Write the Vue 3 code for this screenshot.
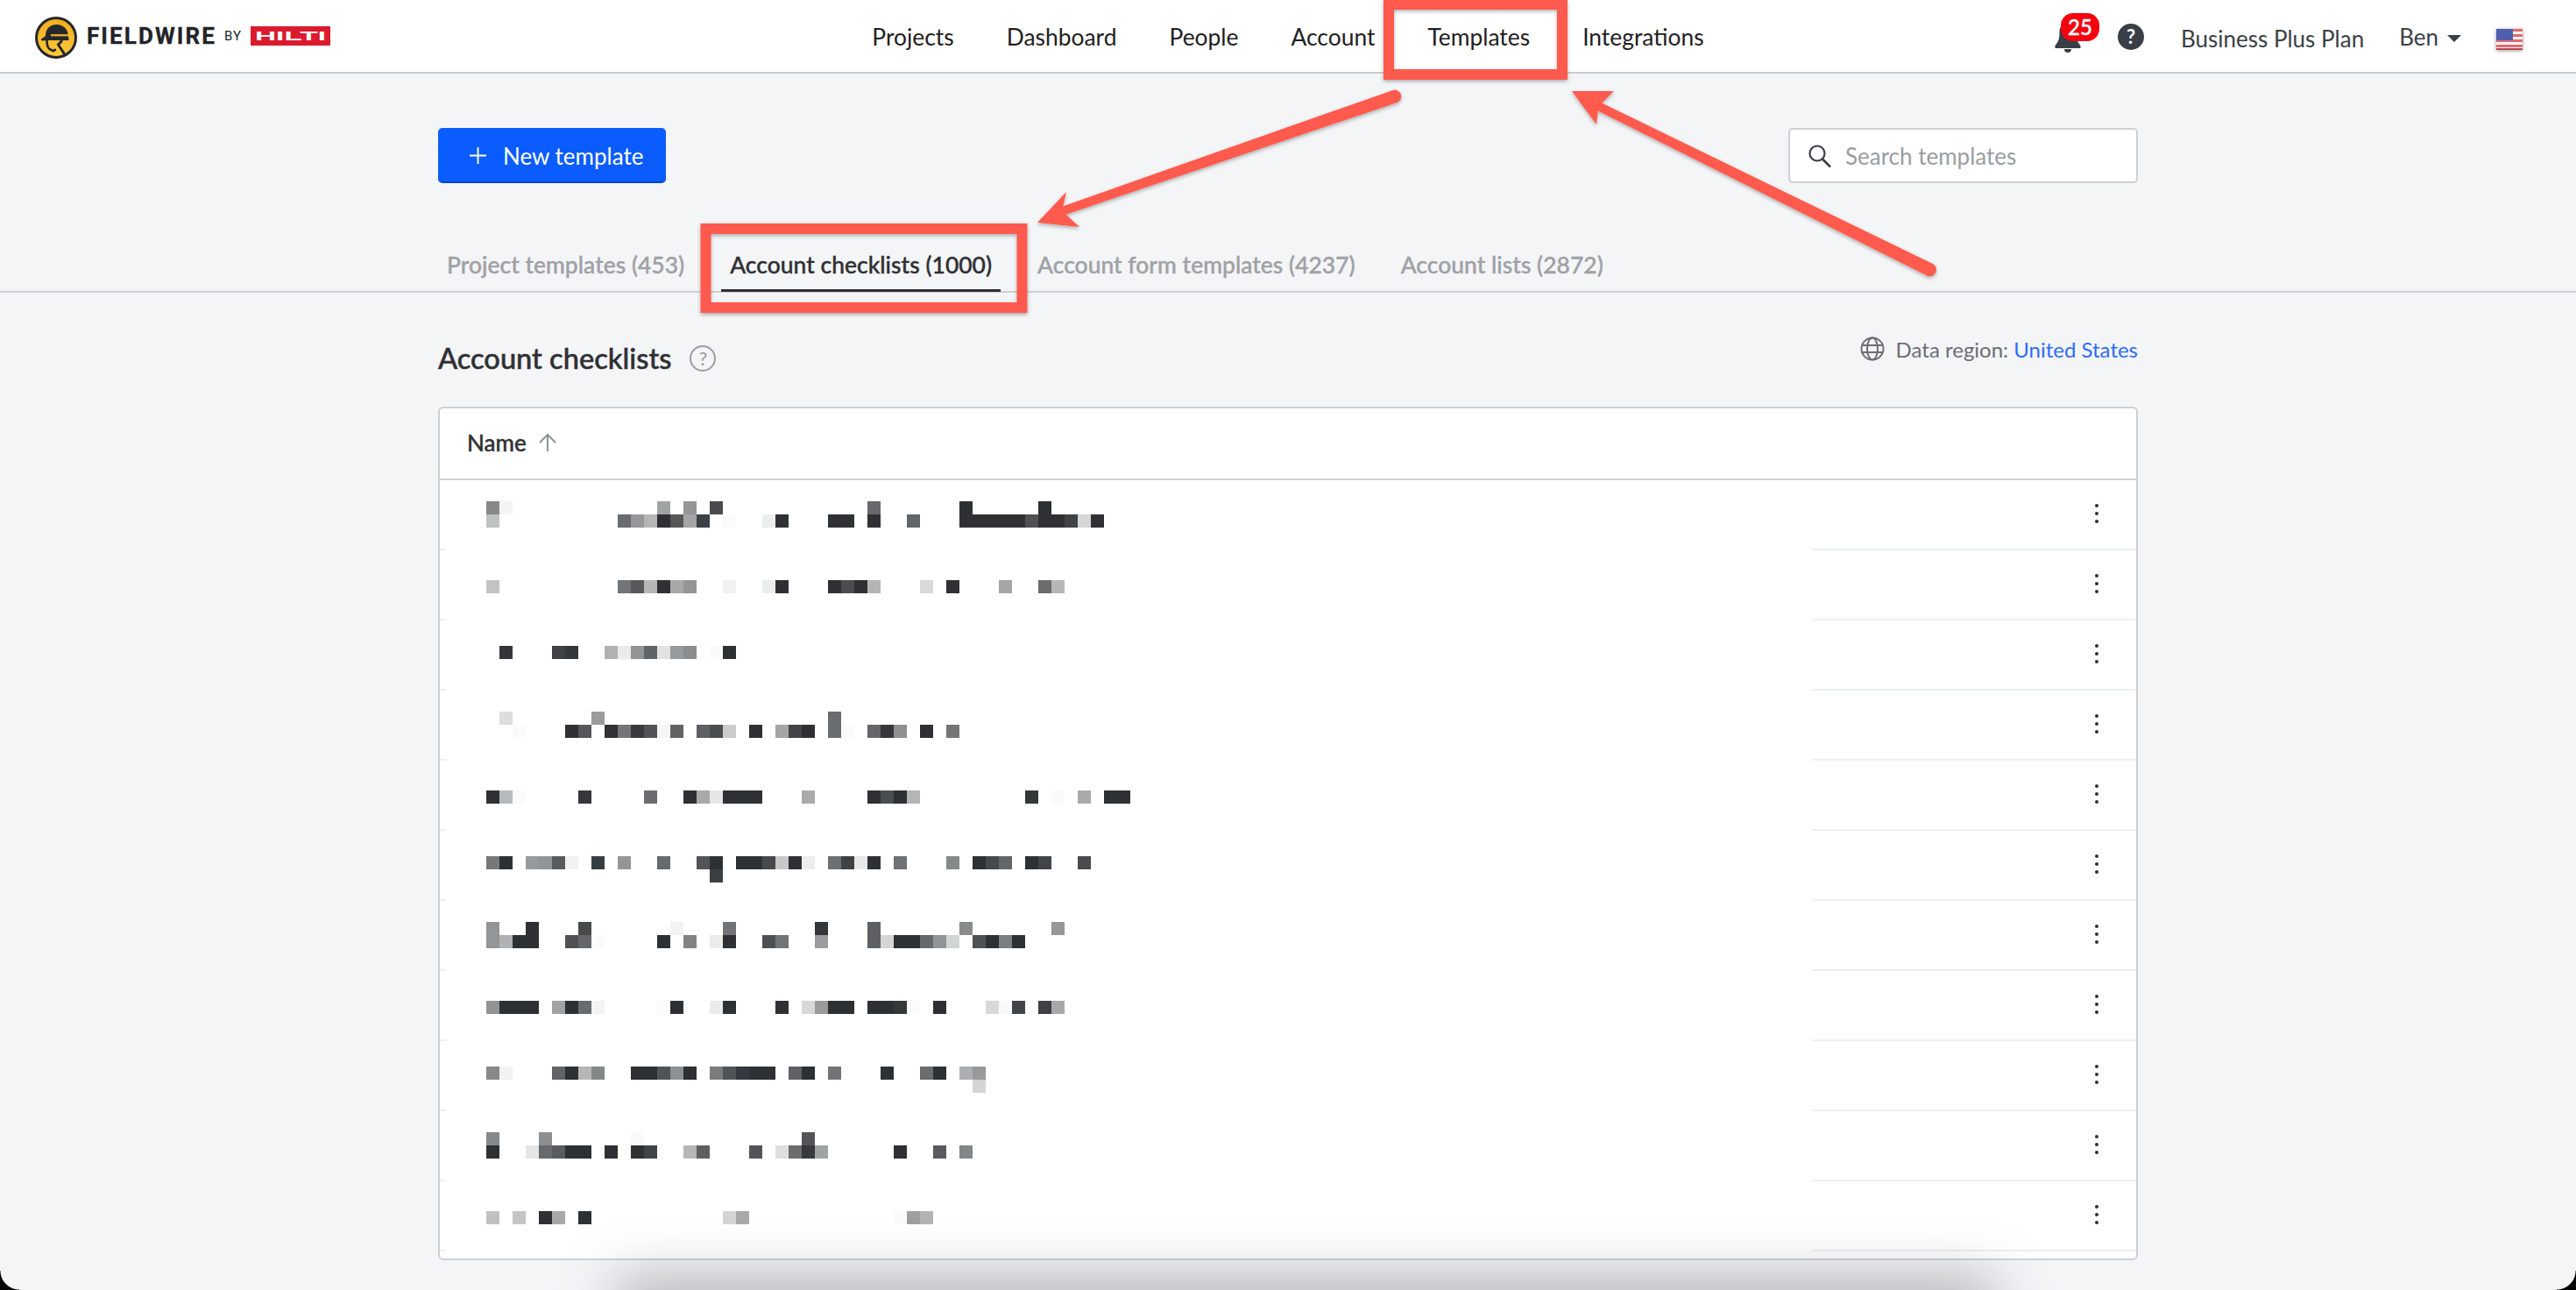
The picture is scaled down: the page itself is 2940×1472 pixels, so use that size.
<script setup>
const navItems = ['Projects', 'Dashboard', 'People', 'Account', 'Templates', 'Integrations']
const tabs = ['Project templates (453)', 'Account checklists (1000)', 'Account form templates (4237)', 'Account lists (2872)']
const rows = Array.from({ length: 11 }, (_, i) => i)

const D = '2f3033'
const mosaicData = {
  0: `0:87888a 1:f3f4f4 13:a2a3a5 15:949597 17:4a4b4d 29:68696c 36:${D} 42:${D}`,
  1: `0:c0c2c2 10:6a6b6e 11:97989a 12:b5b7b6 13:${D} 14:555658 15:a5a5a6 16:3a4045 18:fbfbfb 21:eceeed 22:${D} 26:${D} 27:313234 29:${D} 32:646568 36:${D} 37:${D} 38:${D} 39:${D} 40:${D} 41:505154 42:${D} 43:${D} 44:414245 45:d6d6d6 46:${D}`,
  6: `0:c2c4c4 10:737477 11:58595c 12:b5b7b6 13:${D} 14:a8a8a9 15:949597 18:f2f2f2 21:eceeed 22:${D} 26:${D} 27:4c4d50 28:${D} 29:b5b5b6 33:d9d9da 35:${D} 39:a5a6a8 42:6b6c6e 43:b6b6b7`,
  11: `1:35363a 5:404144 6:36373a 9:b0b1b0 10:ebebeb 11:939495 12:626365 13:e2e2e2 14:98999b 15:8b8c8e 17:fafafa 18:${D}`,
  16: `1:dddddd 8:9a9b9a 26:6b6c6e`,
  17: `2:fbfbfb 6:${D} 7:56575a 9:313235 10:747577 11:383a3d 12:525356 13:f6f6f6 14:626365 16:5f6063 17:4b4e50 18:cbcbcb 20:${D} 22:a4a5a5 23:434447 24:${D} 26:6b6c6e 27:fbfbfb 29:656669 30:36373a 31:8f9092 33:${D} 35:747577`,
  22: `0:${D} 1:b8b9bb 2:fafafa 7:36373a 12:6b6c6e 15:${D} 16:a9a9aa 17:e6e6e6 18:${D} 19:${D} 20:${D} 24:aaaaab 29:${D} 30:4c4d50 31:${D} 32:b5b5b6 41:343838 43:fafafa 45:a9a9aa 47:${D} 48:${D}`,
  27: `0:77787a 1:${D} 3:98999a 4:939495 5:5a5b5e 6:f1f1f1 8:373e43 10:959696 13:68696c 16:535457 17:${D} 19:${D} 20:${D} 21:48494c 22:c8c8c8 23:${D} 24:ededed 26:6e6f72 27:404144 28:e8e8e8 29:${D} 31:707174 35:87888a 37:${D} 38:454a4c 39:646568 41:${D} 42:434447 45:4a4b4e`,
  28: `17:3b3f43`,
  32: `0:949597 3:${D} 7:48494b 14:f3f3f3 18:727376 25:35363a 29:5e5f62 36:898a8c 43:969798`,
  33: `0:949597 1:b0b1b3 2:${D} 3:${D} 6:4f5053 7:66676a 8:fafafa 13:${D} 15:828385 17:ebebeb 18:${D} 21:4e4f52 22:727375 25:9a9b9d 29:5e5f62 30:d5d5d5 31:${D} 32:${D} 33:68696c 34:939495 35:d3d5d4 37:505154 38:${D} 39:7d7e80 40:${D}`,
  38: `0:929395 1:${D} 2:${D} 3:${D} 5:a1a2a4 6:${D} 7:6a6b6e 8:f3f3f3 13:fbfbfb 14:${D} 17:ebebeb 18:${D} 22:${D} 24:d8d8d8 25:9b9b9b 26:${D} 27:${D} 29:${D} 30:${D} 31:343939 32:fcfcfc 34:${D} 38:d8d8d8 39:fafafa 40:434447 42:404144 43:a8a8a8`,
  43: `0:87888a 1:f2f2f2 5:626366 6:${D} 7:b5b6b5 8:868789 11:${D} 12:${D} 13:525356 14:8f9092 15:${D} 17:7a7b7d 18:525356 19:33393e 20:${D} 21:${D} 23:606164 24:${D} 26:737477 30:${D} 33:6b6c6e 34:${D} 36:adaeb0 37:98999b`,
  44: `37:d3d5d5`,
  48: `0:87888a 4:8d8e90 11:fafafa 24:545558`,
  49: `0:${D} 3:e6e6e6 4:68696c 5:5a5b5e 6:${D} 7:${D} 9:${D} 11:${D} 12:424346 15:b5b6b5 16:5e5f62 20:535457 22:dedede 23:6b6c6e 24:37383b 25:a2a3a5 31:${D} 34:5a5b5e 36:848587`,
  54: `0:c0c2c1 2:c5c5c6 4:${D} 5:a8a8a8 7:${D} 18:d5d5d6 19:a9a9a9 31:fbfbfb 32:9f9fa1 33:b3b3b4`
}

const cells = Object.entries(mosaicData).flatMap(([row, list]) =>
  list.split(' ').map((entry) => {
    const [col, hex] = entry.split(':')
    return { key: `${row}-${col}`, gridRow: Number(row) + 1, gridColumn: Number(col) + 1, background: `#${hex}` }
  })
)
</script>

<template>
  <div class="page">
    <header class="topbar">
      <div class="brand">
        <svg class="logo-mark" viewBox="0 0 48 48" aria-hidden="true">
          <defs>
            <linearGradient id="logoFill" x1="0" y1="0" x2="0" y2="1">
              <stop offset="0" stop-color="#f2ad1e" />
              <stop offset="1" stop-color="#fdc93c" />
            </linearGradient>
          </defs>
          <circle cx="24" cy="24" r="22.5" fill="url(#logoFill)" stroke="#26272b" stroke-width="3" />
          <path d="M6.5 26 L12 22 C12 14 17 9 24.5 9 C32 9 37.5 14 38 22 L38.5 27 L13 27 L8 27.5 Z" fill="#26272b" />
          <rect x="18" y="20" width="20" height="2.4" fill="#e0a92c" />
          <path d="M13.5 27 C13.5 32 14 35 16.5 37 L20.5 39 L24 37.5" fill="none" stroke="#26272b" stroke-width="2.6" />
          <path d="M31 27 L26.5 32 L35 45" fill="none" stroke="#26272b" stroke-width="3" />
        </svg>
        <span class="wordmark">FIELDWIRE</span>
        <span class="by">BY</span>
        <svg class="hilti" viewBox="0 0 91 22" aria-label="Hilti">
          <rect width="91" height="22" fill="#db1a2e" />
          <text x="5" y="16" textLength="81" lengthAdjust="spacingAndGlyphs" class="hilti-text">HILTI</text>
        </svg>
      </div>

      <nav class="nav">
        <a v-for="item in navItems" :key="item" class="nav-item" :class="{ active: item === 'Templates' }">{{ item }}</a>
      </nav>

      <div class="top-right">
        <div class="bell">
          <svg viewBox="0 0 30 34" class="bell-icon" aria-hidden="true">
            <path d="M15 0 C8 0 5.5 5 5.5 11 C5.5 19 4 22 0.5 26 L0.5 29 L29.5 29 L29.5 26 C26 22 24.500 19 24.500 11 C24.500 5 22 0 15 0 Z M11 30 L19 30 C19 33 17 34 15 34 C13 34 11 33 11 30 Z" fill="#3a3e46" />
          </svg>
          <span class="badge">25</span>
        </div>
        <span class="help-solid">?</span>
        <span class="plan">Business Plus Plan</span>
        <span class="user">Ben<i class="caret"></i></span>
        <svg class="flag" viewBox="0 0 30 24" aria-hidden="true">
          <rect width="30" height="24" fill="#f4f0f0" />
          <rect y="0" width="30" height="3" fill="#e06a70" />
          <rect y="6" width="30" height="3" fill="#e06a70" />
          <rect y="12" width="30" height="3" fill="#e06a70" />
          <rect y="18" width="30" height="3" fill="#e06a70" />
          <rect y="22" width="30" height="2" fill="#b8454c" />
          <rect width="19" height="13" fill="#4f5fae" />
        </svg>
      </div>
    </header>

    <main class="content">
      <div class="toolbar">
        <button class="new-btn" type="button">
          <svg class="plus" viewBox="0 0 20 20" aria-hidden="true"><path d="M10 0 V20 M0 10 H20" stroke="#fff" stroke-width="2" fill="none" /></svg>
          New template
        </button>
        <div class="search">
          <svg class="search-icon" viewBox="0 0 26 26" aria-hidden="true">
            <circle cx="10" cy="10" r="8.500" fill="none" stroke="#3a3e46" stroke-width="2.200" />
            <path d="M16 16.500 L25 25.500" stroke="#3a3e46" stroke-width="2.600" fill="none" />
          </svg>
          <span class="placeholder">Search templates</span>
        </div>
      </div>
    </main>

    <div class="tabs-wrap">
      <div class="tabs">
        <a v-for="tab in tabs" :key="tab" class="tab" :class="{ active: tab.startsWith('Account checklists') }">{{ tab }}</a>
      </div>
    </div>

    <section class="content">
      <div class="title-row">
        <div class="title-left">
          <h1 class="title">Account checklists</h1>
          <span class="help-outline">?</span>
        </div>
        <div class="region">
          <svg class="globe" viewBox="0 0 28 28" aria-hidden="true">
            <g fill="none" stroke="#6b6e76" stroke-width="2">
              <circle cx="14" cy="14" r="12.500" />
              <ellipse cx="14" cy="14" rx="6" ry="12.500" />
              <path d="M2 10 H26 M2 18 H26" />
            </g>
          </svg>
          <span>Data region: <a class="link">United States</a></span>
        </div>
      </div>

      <div class="table">
        <div class="thead">
          <span>Name</span>
          <svg class="sort" viewBox="0 0 22 20" aria-hidden="true"><path d="M11 20 V1 M2 10 L11 1 L20 10" fill="none" stroke="#909298" stroke-width="2" /></svg>
        </div>
        <div v-for="row in rows" :key="row" class="row">
          <span class="kebab"><i></i><i></i><i></i></span>
        </div>
        <div class="mosaic">
          <div class="mosaic-grid">
            <i
              v-for="cell in cells"
              :key="cell.key"
              :style="{ gridRow: cell.gridRow, gridColumn: cell.gridColumn, background: cell.background }"
            ></i>
          </div>
        </div>
      </div>
    </section>

    <div class="bottom-shade"></div>
    <i class="corner left"></i>
    <i class="corner right"></i>

    <svg class="annotations" viewBox="0 0 2940 1472" aria-hidden="true">
      <defs>
        <filter id="markShadow" x="-10%" y="-10%" width="120%" height="130%">
          <feDropShadow dx="0" dy="2" stdDeviation="2" flood-color="#000" flood-opacity="0.3" />
        </filter>
      </defs>
      <g filter="url(#markShadow)">
        <rect x="1585" y="5" width="198" height="80" fill="none" stroke="#fe5a4d" stroke-width="12" />
        <rect x="805.500" y="261" width="361" height="90" fill="none" stroke="#fe5a4d" stroke-width="12" />
        <path d="M1184 254 L1217 219 L1213.400 235.300 L1589.600 102.900 A7.500 7.500 0 0 1 1594.400 117.100 L1216.600 244.700 L1232 259 Z" fill="#fe5a4d" />
        <path d="M1794 104 L1842 104 L1828.200 117.500 L2206.300 301.300 A7.500 7.500 0 0 1 2199.700 314.700 L1823.800 126.500 L1822 142 Z" fill="#fe5a4d" />
      </g>
    </svg>
  </div>
</template>

<style scoped>
.page {
  position: relative;
  width: 2940px;
  height: 1472px;
  overflow: hidden;
  background: #f4f5f7;
  font-family: Lato, "Liberation Sans", sans-serif;
  font-size: 26px;
  color: #2f3033;
}

.topbar {
  display: grid;
  grid-template-columns: 1fr auto 1fr;
  align-items: center;
  height: 82px;
  background: #fff;
  border-bottom: 2px solid #cbcbcb;
  padding: 0 40px;
}

.brand {
  display: flex;
  align-items: center;
}
.logo-mark {
  width: 48px;
  height: 48px;
  margin-right: 11px;
  margin-top: 4px;
}
.wordmark {
  font-family: Roboto, sans-serif;
  font-weight: 700;
  font-size: 26px;
  letter-spacing: 2.100px;
  color: #212327;
  -webkit-text-stroke: 0.3px #212327;
}
.by {
  font-family: Roboto, sans-serif;
  font-size: 15px;
  letter-spacing: 1px;
  color: #212327;
  margin-left: 9px;
  margin-right: 10px;
}
.hilti {
  width: 91px;
  height: 22px;
}
.hilti-text {
  font-family: "Liberation Sans", sans-serif;
  font-weight: 700;
  font-size: 14px;
  fill: #fff;
}

.nav {
  display: flex;
  height: 82px;
}
.nav-item {
  box-sizing: border-box;
  display: flex;
  align-items: center;
  padding: 4px 30px 0;
  font-size: 26.400px;
  color: #1f2023;
  border-bottom: 3px solid transparent;
}
.nav-item.active {
  border-bottom-color: #3f6fd8;
}

.top-right {
  display: flex;
  align-items: center;
  justify-content: flex-end;
  gap: 42px;
  padding-top: 2px;
  margin-right: 21px;
  color: #3b3f46;
}
.bell {
  position: relative;
  width: 30px;
  height: 34px;
  margin-top: 2px;
}
.bell-icon {
  display: block;
  width: 30px;
  height: 34px;
}
.badge {
  position: absolute;
  left: 7px;
  top: -11px;
  width: 44px;
  height: 32px;
  border-radius: 14px;
  background: #f5000f;
  color: #fff;
  font-size: 24px;
  font-weight: 500;
  line-height: 32px;
  text-align: center;
  -webkit-text-stroke: 0.4px #fff;
}
.help-solid {
  width: 30px;
  height: 30px;
  border-radius: 50%;
  background: #3a3e46;
  color: #fff;
  font-size: 22px;
  font-weight: 700;
  line-height: 30px;
  text-align: center;
}
.plan {
  margin-top: 4px;
  margin-right: -2px;
}
.user {
  display: flex;
  align-items: center;
  margin-right: -2px;
}
.caret {
  width: 0;
  height: 0;
  margin-left: 10px;
  margin-top: 4px;
  border-left: 8px solid transparent;
  border-right: 8px solid transparent;
  border-top: 8px solid #3b3f46;
}
.flag {
  width: 30px;
  height: 24px;
  margin-top: 6px;
  filter: drop-shadow(0 1px 2px rgba(0, 0, 0, 0.4));
}

.content {
  width: 1940px;
  margin: 0 auto;
}

.toolbar {
  display: flex;
  justify-content: space-between;
  padding-top: 62px;
}
.new-btn {
  box-sizing: border-box;
  display: flex;
  align-items: center;
  gap: 19px;
  height: 63px;
  width: 260px;
  padding: 2px 0 0 36px;
  border: 0;
  border-bottom: 2px solid #0048cf;
  border-radius: 5px;
  background: #0b5cff;
  color: #fff;
  font: inherit;
}
.plus {
  width: 19px;
  height: 19px;
}
.search {
  box-sizing: border-box;
  display: flex;
  align-items: center;
  gap: 16px;
  width: 399px;
  height: 63px;
  padding-left: 21px;
  background: #fff;
  border: 2px solid #cfd0d6;
  border-radius: 5px;
}
.search-icon {
  width: 26px;
  height: 26px;
}
.placeholder {
  color: #9a9ca2;
}

.tabs-wrap {
  box-sizing: border-box;
  height: 125px;
  border-bottom: 2px solid #cfd0d6;
}
.tabs {
  display: flex;
  gap: 32px;
  width: 1940px;
  height: 123px;
  margin: 0 auto;
  align-items: flex-end;
}
.tab {
  padding: 0 10px 8px;
  font-size: 26.400px;
  letter-spacing: 0.040px;
  line-height: 40px;
  font-weight: 500;
  color: #a0a1a6;
  border-bottom: 3px solid transparent;
  margin-bottom: -1px;
  -webkit-text-stroke: 0.4px currentColor;
}
.tab.active {
  color: #2f3033;
  border-bottom-color: #2f3033;
}

.title-row {
  display: flex;
  justify-content: space-between;
  height: 130px;
}
.title-left {
  display: flex;
  align-items: center;
  gap: 21px;
  height: 46px;
  margin-top: 52px;
}
.title {
  margin: 0;
  font-size: 32.600px;
  font-weight: 500;
  line-height: 46px;
  color: #2f3033;
  -webkit-text-stroke: 0.5px #2f3033;
}
.help-outline {
  box-sizing: border-box;
  width: 30px;
  height: 30px;
  border: 2px solid #9a9ca2;
  border-radius: 50%;
  color: #9a9ca2;
  font-size: 22px;
  line-height: 26px;
  text-align: center;
}
.region {
  display: flex;
  align-items: center;
  gap: 13px;
  height: 30px;
  margin-top: 49px;
  font-size: 24px;
  color: #6b6e76;
}
.globe {
  width: 28px;
  height: 28px;
}
.link {
  color: #2e6cf6;
}

.table {
  position: relative;
  box-sizing: border-box;
  height: 974px;
  background: #fff;
  border: 2px solid #cfd0d6;
  border-radius: 6px;
  overflow: hidden;
}
.thead {
  box-sizing: border-box;
  display: flex;
  align-items: center;
  gap: 13px;
  height: 82px;
  padding: 0 0 2px 31px;
  border-bottom: 2px solid #cfd0d6;
  font-weight: 500;
  -webkit-text-stroke: 0.4px #2f3033;
}
.sort {
  width: 22px;
  height: 20px;
}
.row {
  box-sizing: border-box;
  display: flex;
  align-items: center;
  justify-content: flex-end;
  height: 80px;
  padding: 0 43px 2px 0;
  border-bottom: 2px solid #eeeff1;
}
.kebab {
  display: flex;
  flex-direction: column;
  gap: 5px;
}
.kebab i {
  display: block;
  width: 4px;
  height: 4px;
  border-radius: 50%;
  background: #2f3033;
}

.mosaic {
  position: absolute;
  left: 7px;
  top: 82px;
  width: 1559px;
  height: 888px;
  background: #fff;
  padding: 24px 0 0 46px;
  box-sizing: border-box;
}
.mosaic-grid {
  display: grid;
  grid-template-columns: repeat(49, 15px);
  grid-template-rows: repeat(55, 15px);
}
.mosaic-grid i {
  display: block;
}

.bottom-shade {
  position: absolute;
  left: 705px;
  top: 1462px;
  width: 1570px;
  height: 54px;
  background: rgba(90, 92, 96, 0.5);
  filter: blur(32px);
  pointer-events: none;
}

.corner {
  position: absolute;
  bottom: 0;
  width: 22px;
  height: 22px;
}
.corner.left {
  left: 0;
  background: radial-gradient(circle at 100% 0, transparent 21px, #050805 22px);
}
.corner.right {
  right: 0;
  background: radial-gradient(circle at 0 0, transparent 21px, #050505 22px);
}

.annotations {
  position: absolute;
  left: 0;
  top: 0;
  width: 2940px;
  height: 1472px;
  pointer-events: none;
}
</style>

<style>
html, body {
  margin: 0;
  background: #f4f5f7;
  overflow: hidden;
}
</style>
